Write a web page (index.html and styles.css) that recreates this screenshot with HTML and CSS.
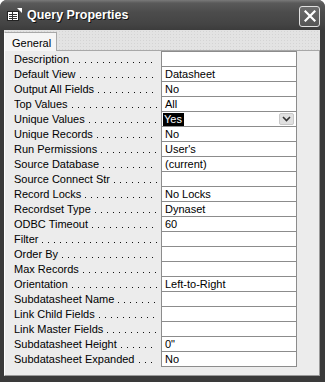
FILE: index.html
```html
<!DOCTYPE html>
<html lang="en">
<head>
  <meta charset="UTF-8">
  <title>Query Properties</title>
  <link rel="stylesheet" href="styles.css">
</head>
<body>
  <div class="window">
    <div class="titlebar">
      <svg class="app-icon" width="17" height="15" viewBox="0 0 17 15">
        <rect x="1.5" y="4.5" width="11" height="9" fill="#fff" stroke="#222"/>
        <line x1="3" y1="7.5" x2="11" y2="7.5" stroke="#333"/>
        <line x1="3" y1="9.5" x2="11" y2="9.5" stroke="#333"/>
        <line x1="3" y1="11.5" x2="11" y2="11.5" stroke="#333"/>
        <line x1="6.5" y1="5" x2="6.5" y2="13" stroke="#333"/>
        <path d="M11 1 L16 1 L16 6 Z" fill="#fff"/>
      </svg>
      <span class="title">Query Properties</span>
      <div class="close">
        <svg width="12" height="12" viewBox="0 0 12 12">
          <path d="M1.5 1.5 L10.5 10.5 M10.5 1.5 L1.5 10.5" stroke="#fff" stroke-width="2.2" stroke-linecap="square"/>
        </svg>
      </div>
    </div>
    <div class="client">
      <div class="tabstrip">
        <div class="tab">General</div>
      </div>
      <div class="page">
        <div class="grid">
          <div class="row"><div class="label"><span>Description</span><span class="dots"></span></div><div class="value"></div></div>
          <div class="row"><div class="label"><span>Default View</span><span class="dots"></span></div><div class="value">Datasheet</div></div>
          <div class="row"><div class="label"><span>Output All Fields</span><span class="dots"></span></div><div class="value">No</div></div>
          <div class="row"><div class="label"><span>Top Values</span><span class="dots"></span></div><div class="value">All</div></div>
          <div class="row"><div class="label"><span>Unique Values</span><span class="dots"></span></div><div class="value value-combo"><span class="selected">Yes</span><span class="drop"><svg width="9" height="6" viewBox="0 0 9 6"><path d="M1 1 L4.5 4.5 L8 1" fill="none" stroke="#333" stroke-width="1.6"/></svg></span></div></div>
          <div class="row"><div class="label"><span>Unique Records</span><span class="dots"></span></div><div class="value">No</div></div>
          <div class="row"><div class="label"><span>Run Permissions</span><span class="dots"></span></div><div class="value">User's</div></div>
          <div class="row"><div class="label"><span>Source Database</span><span class="dots"></span></div><div class="value">(current)</div></div>
          <div class="row"><div class="label"><span>Source Connect Str</span><span class="dots"></span></div><div class="value"></div></div>
          <div class="row"><div class="label"><span>Record Locks</span><span class="dots"></span></div><div class="value">No Locks</div></div>
          <div class="row"><div class="label"><span>Recordset Type</span><span class="dots"></span></div><div class="value">Dynaset</div></div>
          <div class="row"><div class="label"><span>ODBC Timeout</span><span class="dots"></span></div><div class="value">60</div></div>
          <div class="row"><div class="label"><span>Filter</span><span class="dots"></span></div><div class="value"></div></div>
          <div class="row"><div class="label"><span>Order By</span><span class="dots"></span></div><div class="value"></div></div>
          <div class="row"><div class="label"><span>Max Records</span><span class="dots"></span></div><div class="value"></div></div>
          <div class="row"><div class="label"><span>Orientation</span><span class="dots"></span></div><div class="value">Left-to-Right</div></div>
          <div class="row"><div class="label"><span>Subdatasheet Name</span><span class="dots"></span></div><div class="value"></div></div>
          <div class="row"><div class="label"><span>Link Child Fields</span><span class="dots"></span></div><div class="value"></div></div>
          <div class="row"><div class="label"><span>Link Master Fields</span><span class="dots"></span></div><div class="value"></div></div>
          <div class="row"><div class="label"><span>Subdatasheet Height</span><span class="dots"></span></div><div class="value">0"</div></div>
          <div class="row last"><div class="label"><span>Subdatasheet Expanded</span><span class="dots"></span></div><div class="value">No</div></div>
        </div>
      </div>
    </div>
  </div>
</body>
</html>
```

FILE: styles.css
```css
body {
  margin: 0;
  background: #fff;
  font-family: "Liberation Sans", Arial, sans-serif;
}
.window {
  width: 325px;
  height: 382px;
  box-sizing: border-box;
  background: #3a3a3a;
  border-radius: 7px 7px 0 0;
  display: flex;
  flex-direction: column;
}
.titlebar {
  height: 30px;
  flex-shrink: 0;
  display: flex;
  align-items: center;
  padding: 0 6px 0 6px;
  border-radius: 7px 7px 0 0;
  background: linear-gradient(#7a7a7a 0, #5a5a5a 3px, #4c4c4c 12px, #444 24px, #3c3c3c 30px);
}
.app-icon {
  margin-right: 4px;
  margin-top: -2px;
}
.title {
  color: #fff;
  font-weight: bold;
  font-size: 12.5px;
  text-shadow: 1px 1px 0 #111;
  flex: 1;
}
.close {
  width: 19px;
  height: 19px;
  border: 1px solid #e0e0e0;
  border-radius: 3px;
  background: linear-gradient(#6c6c6c, #555);
  display: flex;
  align-items: center;
  justify-content: center;
  margin-top: 2px;
  margin-right: -1px;
}
.client {
  flex: 1;
  margin: 0 5px 6px 4px;
  background: #ececec;
  display: flex;
  flex-direction: column;
}
.tabstrip {
  height: 20px;
  flex-shrink: 0;
  background-color: #e3e3e3;
  background-image: radial-gradient(#d4d4d4 0.6px, transparent 0.8px);
  background-size: 3px 3px;
  display: flex;
  align-items: flex-end;
}
.tab {
  width: 53px;
  height: 19px;
  box-sizing: border-box;
  background: #f5f5f5;
  border: 1px solid #a8a8a8;
  border-bottom: none;
  border-left-color: #fff;
  font-size: 11px;
  color: #000;
  padding: 4px 0 0 7px;
  position: relative;
  top: 1px;
}
.page {
  flex: 1;
  border-top: 1px solid #a8a8a8;
  border-left: 1px solid #fff;
  border-right: 1px solid #9a9a9a;
  border-bottom: 1px solid #9a9a9a;
  background: #ececec;
  padding-left: 9px;
}
.row {
  display: flex;
  height: 15px;
  font-size: 11px;
  line-height: 14px;
  color: #000;
}
.label {
  width: 143px;
  margin-right: 4px;
  display: flex;
  white-space: nowrap;
  overflow: hidden;
  padding-top: 1px;
  box-sizing: border-box;
}
.dots {
  flex: 1;
  margin-left: 4px;
  background-image: repeating-linear-gradient(to right, #111 0, #111 1px, transparent 1px, transparent 6px);
  background-size: 100% 1px;
  background-position: left bottom 3px;
  background-repeat: no-repeat;
}
.value {
  width: 136px;
  box-sizing: border-box;
  background: #fff;
  border: 1px solid #8c8c8c;
  border-bottom: none;
  padding: 0 0 0 3px;
  white-space: nowrap;
  line-height: 14px;
}
.last .value {
  height: 16px;
  border-bottom: 1px solid #8c8c8c;
}
.value-combo {
  display: flex;
  align-items: center;
  padding-left: 1px;
}
.selected {
  background: #000;
  color: #fff;
  padding: 0 2px 0 1px;
  line-height: 13px;
}
.drop {
  margin-left: auto;
  margin-right: 2px;
  width: 13px;
  height: 10px;
  background: #e0e0e0;
  border: 1px solid #c8c8c8;
  border-radius: 2px;
  display: flex;
  align-items: center;
  justify-content: center;
}
```
